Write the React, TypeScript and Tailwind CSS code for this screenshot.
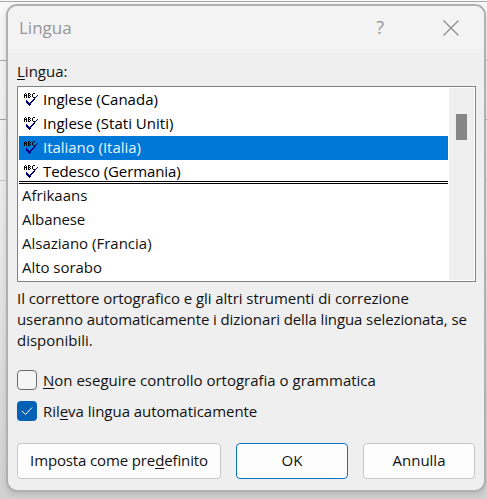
import React from "react";

function AbcCheck() {
  return (
    <svg width="14" height="14" viewBox="0 0 14 14" shapeRendering="crispEdges" className="mt-[5px] shrink-0">
      <g fill="#000">
        <path d="M1 0h1v1H1zM0 1h1v4H0zM2 1h1v4H2zM1 2h1v1H1z" />
        <path d="M4 0h1v5H4zM5 0h1v1H5zM5 2h1v1H5zM5 4h1v1H5zM6 1h1v1H6zM6 3h1v1H6z" />
        <path d="M9 0h2v1H9zM8 1h1v3H8zM9 4h2v1H9z" />
      </g>
      <path
        d="M13 2h1v1h-1zM12 3h1v1h-1zM11 4h1v1h-1zM10 5h1v1h-1zM9 6h2v1H9zM2 7h1v1H2zM2 8h2v1H2zM8 7h2v1H8zM7 8h2v1H7zM2 9h3v1H2zM6 9h2v1H6zM3 10h4v1H3zM4 11h3v1H4zM5 12h1v1H5z"
        fill="#000080"
      />
    </svg>
  );
}

const recent = [
  { name: "Inglese (Canada)", text: "tracking-[0px]", row: "h-[24px] text-black" },
  { name: "Inglese (Stati Uniti)", text: "tracking-[0.02px]", row: "h-[24px] text-black" },
  { name: "Italiano (Italia)", text: "tracking-[-0.04px]", row: "h-[24px] bg-[#0078d7] text-[#e8f4ff]" },
  { name: "Tedesco (Germania)", text: "tracking-[-0.1px]", row: "h-[21px] text-black" },
];

const others = [
  { name: "Afrikaans", text: "tracking-[0px]" },
  { name: "Albanese", text: "tracking-[-0.1px]" },
  { name: "Alsaziano (Francia)", text: "tracking-[0px]" },
  { name: "Alto sorabo", text: "tracking-[-0.04px]" },
];

function Key({ children }: { children: React.ReactNode }) {
  return <span className="underline decoration-1 underline-offset-2">{children}</span>;
}

export default function App() {
  return (
    <div className="relative h-[499px] w-[487px] overflow-hidden bg-linear-to-b from-[#f8f8f8] via-[#e8e8e8] to-[#d2d2d2] pt-[4px] pl-[6px] font-['Open_Sans','Noto_Sans',sans-serif] text-[15px] whitespace-nowrap text-[#111]">
      <div className="absolute inset-x-0 top-px h-[60px] border-y border-[#a8a8a8]" />
      <div className="absolute inset-x-0 top-[119px] h-[62px] border-t border-b border-t-[#a0a0a0] border-b-[#c8c8c8]" />
      <div className="relative flex h-[488px] w-[480px] flex-col overflow-hidden rounded-[11px] border-2 border-[#b0b0b0] bg-[#efefef] shadow-[0_3px_6px_rgba(0,0,0,0.12)]">
        <header className="flex h-[43px] shrink-0 items-center bg-[#f3f3f3] pl-[11px] text-[#969696]">
          <h1 className="text-[17px] leading-[43px]">Lingua</h1>
          <span className="mr-[59px] ml-auto text-[18px] leading-[41px]">?</span>
          <svg width="16" height="16" viewBox="0 0 16 16" className="mr-[25px]" fill="none" stroke="#8c8c8c" strokeWidth="1.2">
            <path d="M.5.5l15 15M15.500.5l-15 15" />
          </svg>
        </header>
        <main className="flex flex-col pl-[9px]">
          <label className="mt-[12px] h-[25px] leading-[20px]"><Key>L</Key>ingua:</label>
          <div className="flex h-[196px] w-[459px] justify-between border border-[#828282] bg-white p-px">
            <ul className="w-[429px] leading-[22px] text-[#111]">
              {recent.map((r) => (
                <li key={r.name} className={`flex items-start gap-[5px] pl-[5px] ${r.row}`}>
                  <AbcCheck />
                  <span className={r.text}>{r.name}</span>
                </li>
              ))}
              <li className="h-[3px] border-y border-black" />
              {others.map((r) => (
                <li key={r.name} className="h-[24px] pl-[3px]">
                  <span className={r.text}>{r.name}</span>
                </li>
              ))}
            </ul>
            <div className="w-[25px] bg-[#efefef] pt-[26px] pl-[7px]">
              <div className="h-[26px] w-[11px] bg-[#868686]" />
            </div>
          </div>
          <p className="mt-[6px] h-[64px] leading-[21px]">
            <span className="tracking-[-0.05px]">Il correttore ortografico e gli altri strumenti di correzione</span><br />
            <span className="tracking-[-0.1px]">useranno automaticamente i dizionari della lingua selezionata, se</span><br />
            <span className="tracking-[0px]">disponibili.</span>
          </p>
          <div className="mt-[18px] flex h-[20px] items-center gap-[6px]">
            <span className="h-[20px] w-[20px] rounded-[4px] border border-[#6b6b6b] bg-[#f5f5f5]" />
            <span><Key>N</Key>on eseguire controllo ortografia o grammatica</span>
          </div>
          <div className="mt-[11px] flex h-[20px] items-center gap-[6px]">
            <span className="flex h-[20px] w-[20px] items-center justify-center rounded-[4px] bg-[#0560b6]">
              <svg width="12" height="10" viewBox="0 0 12 10" fill="none" stroke="#fff" strokeWidth="1"><path d="M1 5l3.500 3.500L11 1.500" /></svg>
            </span>
            <span className="tracking-[-0.04px]">Ril<Key>e</Key>va lingua automaticamente</span>
          </div>
          <div className="mt-[22px] flex h-[36px] gap-[15px]">
            <button className="w-[204px] rounded-[4px] border border-[#c8c8c8] bg-[#fdfdfd] pb-px tracking-[-0.13px]">Imposta come pre<Key>d</Key>efinito</button>
            <button className="w-[112px] rounded-[4px] border border-[#0c74c0] bg-[#fdfdfd] pb-px">OK</button>
            <button className="w-[112px] rounded-[4px] border border-[#c8c8c8] bg-[#fdfdfd] pb-px">Annulla</button>
          </div>
        </main>
      </div>
    </div>
  );
}
